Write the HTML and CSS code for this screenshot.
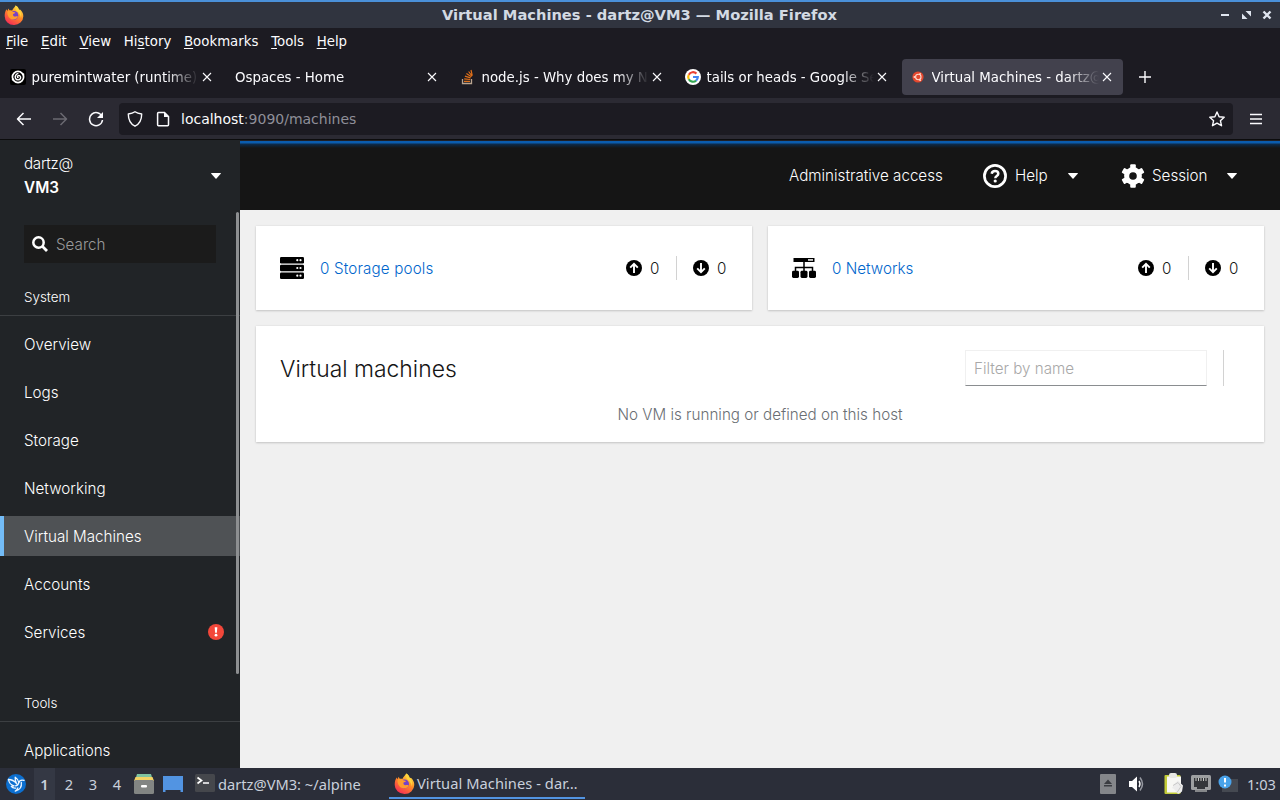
FILE: index.html
```
<!DOCTYPE html>
<html lang="en">
<head>
  <meta charset="utf-8">
  <title>Virtual Machines - dartz@VM3</title>
  <link rel="stylesheet" href="styles.css">
</head>
<body>
  <!-- shared icons -->
  <svg class="defs" width="0" height="0">
    <defs>
      <linearGradient id="foxFlame" x1="0.8" y1="0" x2="0.2" y2="1">
        <stop offset="0" stop-color="#fff04a"/>
        <stop offset="0.45" stop-color="#ff8a26"/>
        <stop offset="1" stop-color="#f5245a"/>
      </linearGradient>
      <symbol id="firefox" viewBox="0 0 20 20">
        <path fill="url(#foxFlame)" d="M2.6 4.2 3.4 6l1-2.4 1.2 2 2.6-.2C9 3.400 10.400 2.500 11.600.4c2.400 1 3 3 3.200 4.200l1.600.2c2 2 3 4.200 2.900 6.600A9.300 8.700 0 0 1 .7 11.200C.6 8.600 1.200 6 2.600 4.200z"/>
        <circle cx="10" cy="10.400" r="4.300" fill="#7542c9"/>
        <path fill="#ff9d2e" d="M3.500 6.400c2-1.400 4-1 5.300.4l2.600.7c-.4 1-1.600 1.200-2.300 1.500-.6 1.800.9 2.900 2.600 2.500 1.400-.3 2.400-.1 2.200.6-1 1.900-3.400 3-5.800 2.300-3.200-1-5.200-4.400-4.600-8z"/>
        <path fill="#ffd53d" d="M11.600.4c2.400 1 3 3 3.200 4.200 2 2 3.200 4.600 2.200 8.400-.3-3-1.800-5-3.400-6.200C12 5.400 10.800 3 11.600.4z"/>
      </symbol>
      <symbol id="close" viewBox="0 0 16 16">
        <path d="M4 4l8 8M12 4l-8 8" stroke="#fbfbfe" stroke-width="1.100" fill="none"/>
      </symbol>
      <symbol id="up" viewBox="0 0 16 16">
        <circle cx="8" cy="8" r="8"/>
        <path d="M8 13V4M4.200 7.700 8 3.900l3.800 3.800" stroke="#fff" stroke-width="1.900" fill="none"/>
      </symbol>
      <symbol id="down" viewBox="0 0 16 16">
        <circle cx="8" cy="8" r="8"/>
        <path d="M8 3v9M4.200 8.300 8 12.100l3.800-3.800" stroke="#fff" stroke-width="1.900" fill="none"/>
      </symbol>
      <symbol id="caret" viewBox="0 0 10 6">
        <path d="M0.500 0h9q.8 0 .2.800L5.500 5.500q-.5.500-1 0L.3.800Q-.3 0 .5 0z" fill="#fff"/>
      </symbol>
    </defs>
  </svg>

  <div class="titlebar">
    <svg class="fox" width="20" height="20"><use href="#firefox"/></svg>
    <span class="window-title">Virtual Machines - dartz@VM3 — Mozilla Firefox</span>
    <svg class="window-buttons" width="54" height="14" viewBox="0 0 54 14">
      <path d="M1 7h8" stroke="#dfe5ef" stroke-width="2"/>
      <path d="M25.500 3h5.500v5.500zM22 5.500V11h5.500z" fill="#dfe5ef"/>
      <path d="M43.500 3.500l7 7M50.500 3.500l-7 7" stroke="#dfe5ef" stroke-width="2.400"/>
    </svg>
  </div>

  <div class="menubar">
    <span><u>F</u>ile</span>
    <span><u>E</u>dit</span>
    <span><u>V</u>iew</span>
    <span>Hi<u>s</u>tory</span>
    <span><u>B</u>ookmarks</span>
    <span><u>T</u>ools</span>
    <span><u>H</u>elp</span>
  </div>

  <div class="tabs">
    <div class="tab">
      <svg width="16" height="16" viewBox="0 0 16 16">
        <rect width="16" height="16" rx="2" fill="#000"/>
        <circle cx="8" cy="8" r="5.600" fill="none" stroke="#fff" stroke-width="1.700"/>
        <path d="M8.500 8.300c-.8.600-1.600-.6-.6-1.400 1.400-1 3.300.6 2.600 2.500-.9 2-4 2-5 0-.9-2 .4-4.600 2.900-5" fill="none" stroke="#fff" stroke-width="1.400"/>
        <path d="M2 11l2-1M12 5.500l2.200-.5" stroke="#fff" stroke-width="1.500"/>
      </svg>
      <span class="tab-label">puremintwater (runtime)</span>
      <svg width="16" height="16"><use href="#close"/></svg>
    </div>
    <div class="tab">
      <span class="tab-label">Ospaces - Home</span>
      <svg width="16" height="16"><use href="#close"/></svg>
    </div>
    <div class="tab">
      <svg width="16" height="16" viewBox="0 0 16 16">
        <path d="M2.500 10v4.500h9V10" fill="none" stroke="#b9a48f" stroke-width="1.300"/>
        <path d="M4 12.300h6M4.200 9.800l6 .7M4.900 7.100l5.700 1.800M6.400 4.500l5 3.200M8.600 2.500l3.500 4.700M11 1l1.200 5.500" stroke="#e0701a" stroke-width="1.200"/>
      </svg>
      <span class="tab-label">node.js - Why does my N</span>
      <svg width="16" height="16"><use href="#close"/></svg>
    </div>
    <div class="tab">
      <svg width="16" height="16" viewBox="0 0 16 16">
        <circle cx="8" cy="8" r="8" fill="#fff"/>
        <g fill="none" stroke-width="2.200">
          <path d="M11.400 4.600A4.800 4.800 0 0 0 3.800 5.700" stroke="#ea4335"/>
          <path d="M3.800 5.700a4.800 4.800 0 0 0 0 4.600" stroke="#fbbc05"/>
          <path d="M3.800 10.300a4.800 4.800 0 0 0 7.300 1.300" stroke="#34a853"/>
          <path d="M8 8h4.800a4.800 4.800 0 0 1-1.700 3.600" stroke="#4285f4"/>
        </g>
      </svg>
      <span class="tab-label">tails or heads - Google Se</span>
      <svg width="16" height="16"><use href="#close"/></svg>
    </div>
    <div class="tab active">
      <svg width="16" height="16" viewBox="0 0 16 16">
        <circle cx="8" cy="8" r="5.600" fill="#e4482e"/>
        <circle cx="8.300" cy="8" r="2.700" fill="none" stroke="#ffd9cc" stroke-width="1.100"/>
        <g fill="#ffd9cc"><circle cx="4.400" cy="8" r="0.900"/><circle cx="10.100" cy="4.800" r="0.900"/><circle cx="10.100" cy="11.200" r="0.900"/></g>
      </svg>
      <span class="tab-label">Virtual Machines - dartz@</span>
      <svg width="16" height="16"><use href="#close"/></svg>
    </div>
    <svg class="new-tab" width="14" height="14" viewBox="0 0 14 14"><path d="M7 1v12M1 7h12" stroke="#fbfbfe" stroke-width="1.400"/></svg>
  </div>

  <div class="navbar">
    <svg class="nav-icon" width="16" height="16" viewBox="0 0 16 16"><path d="M15 8H1.500M7.500 2l-6 6 6 6" fill="none" stroke="#fbfbfe" stroke-width="1.500" stroke-linejoin="round"/></svg>
    <svg class="nav-icon" width="16" height="16" viewBox="0 0 16 16"><path d="M1 8h13.500M8.500 2l6 6-6 6" fill="none" stroke="#6b6a72" stroke-width="1.500" stroke-linejoin="round"/></svg>
    <svg class="nav-icon" width="16" height="16" viewBox="0 0 16 16"><path d="M14 5.500A6.500 6.500 0 1 0 14.500 9" fill="none" stroke="#fbfbfe" stroke-width="1.500"/><path d="M15 1v6H9z" fill="#fbfbfe"/></svg>
    <div class="urlbar">
      <svg width="16" height="16" viewBox="0 0 16 16"><path d="M8 .8C6 2.200 3.800 2.700 1.300 3c0 5.500 1.700 9.800 6.700 12.200C13 12.800 14.700 8.500 14.700 3 12.200 2.700 10 2.200 8 .8z" fill="none" stroke="#fbfbfe" stroke-width="1.400" stroke-linejoin="round"/></svg>
      <svg width="16" height="16" viewBox="0 0 16 16"><path d="M3.500 1.500h6l4 4v8.300q0 .9-.9.900H3.500q-.9 0-.9-.9V2.400q0-.9.900-.9z" fill="none" stroke="#fbfbfe" stroke-width="1.500"/><path d="M9 1v5h5z" fill="#fbfbfe"/></svg>
      <span class="url"><b>localhost</b>:9090/machines</span>
      <svg width="16" height="16" viewBox="0 0 16 16"><path d="M8 1l2.100 4.700 5.100.5-3.800 3.500 1.100 5L8 12.100l-4.500 2.600 1.100-5L.8 6.200l5.100-.5z" fill="none" stroke="#fbfbfe" stroke-width="1.400" stroke-linejoin="round"/></svg>
    </div>
    <svg width="12" height="12" viewBox="0 0 12 12"><path d="M0 1.500h12M0 6h12M0 10.500h12" stroke="#fbfbfe" stroke-width="1.300"/></svg>
  </div>

  <div class="page">
    <div class="sidebar">
      <div class="host">
        <div class="host-name"><span>dartz@</span><strong>VM3</strong></div>
        <svg width="10" height="6"><use href="#caret"/></svg>
      </div>
      <div class="search">
        <svg width="16" height="16" viewBox="0 0 16 16"><circle cx="6.500" cy="6.500" r="5.200" fill="none" stroke="#fff" stroke-width="2.500"/><path d="M10.300 10.300l4.700 4.700" stroke="#fff" stroke-width="2.800"/></svg>
        <span>Search</span>
      </div>
      <div class="nav-section">
        <h2>System</h2>
        <a>Overview</a>
        <a>Logs</a>
        <a>Storage</a>
        <a>Networking</a>
        <a class="current">Virtual Machines</a>
        <a>Accounts</a>
        <a>Services
          <svg width="16" height="16" viewBox="0 0 16 16"><circle cx="8" cy="8" r="8" fill="#f2473a"/><path d="M6.700 3.300h2.600l-.4 5.400H7.100z" fill="#fff"/><circle cx="8" cy="11.200" r="1.400" fill="#fff"/></svg>
        </a>
      </div>
      <div class="nav-section">
        <h2>Tools</h2>
        <a>Applications</a>
      </div>
      <div class="scrollbar"></div>
    </div>

    <div class="main">
      <div class="masthead">
        <span class="access">Administrative access</span>
        <div class="menu help">
          <svg width="24" height="24" viewBox="0 0 24 24">
            <circle cx="12" cy="12" r="10.600" fill="none" stroke="#fff" stroke-width="2.700"/>
            <path d="M8.700 9.700C9 7.900 10.300 7.100 12 7.100c1.900 0 3.300 1 3.300 2.700 0 2.300-3 2.200-3 4.400" fill="none" stroke="#fff" stroke-width="2.500"/>
            <circle cx="12.200" cy="17" r="1.600" fill="#fff"/>
          </svg>
          <span>Help</span>
          <svg width="10" height="6"><use href="#caret"/></svg>
        </div>
        <div class="menu session">
          <svg class="gear" width="24" height="24" viewBox="0 0 24 24">
            <g fill="#fff">
              <rect x="9.200" y="0.300" width="5.600" height="23.400" rx="1"/>
              <rect x="9.200" y="0.300" width="5.600" height="23.400" rx="1" transform="rotate(60 12 12)"/>
              <rect x="9.200" y="0.300" width="5.600" height="23.400" rx="1" transform="rotate(120 12 12)"/>
              <circle cx="12" cy="12" r="8.900"/>
            </g>
            <circle cx="12" cy="12" r="3.800" fill="#151515"/>
          </svg>
          <span>Session</span>
          <svg width="10" height="6"><use href="#caret"/></svg>
        </div>
      </div>

      <div class="content">
        <div class="cards">
          <div class="card summary">
            <svg width="24" height="24" viewBox="0 0 24 24">
              <rect y="1" width="24" height="6.500" rx="1.200"/><rect y="8.800" width="24" height="6.500" rx="1.200"/><rect y="16.500" width="24" height="6.500" rx="1.200"/>
              <g fill="#fff"><circle cx="17.300" cy="4.200" r="1.100"/><circle cx="20.500" cy="4.200" r="1.100"/><circle cx="17.300" cy="12" r="1.100"/><circle cx="20.500" cy="12" r="1.100"/><circle cx="17.300" cy="19.700" r="1.100"/><circle cx="20.500" cy="19.700" r="1.100"/></g>
            </svg>
            <a class="link pools">0 Storage pools</a>
            <div class="counts">
              <svg width="16" height="16"><use href="#up"/></svg><span>0</span>
              <i></i>
              <svg width="16" height="16"><use href="#down"/></svg><span>0</span>
            </div>
          </div>
          <div class="card summary">
            <svg width="24" height="24" viewBox="0 0 24 24">
              <path d="M1.500 2h21v4h-21z"/><path d="M16 3.200h5v1.500h-5z" fill="#fff"/>
              <path d="M12 6v9M3.500 15v-3.500h17V15" fill="none" stroke="#000" stroke-width="1.500"/>
              <rect y="14.800" width="7" height="7.200" rx="1.400"/><rect x="8.500" y="14.800" width="7" height="7.200" rx="1.400"/><rect x="17" y="14.800" width="7" height="7.200" rx="1.400"/>
            </svg>
            <a class="link">0 Networks</a>
            <div class="counts">
              <svg width="16" height="16"><use href="#up"/></svg><span>0</span>
              <i></i>
              <svg width="16" height="16"><use href="#down"/></svg><span>0</span>
            </div>
          </div>
        </div>

        <div class="card machines">
          <div class="toolbar">
            <h1>Virtual machines</h1>
            <input class="filter" type="text" placeholder="Filter by name">
            <i></i>
          </div>
          <p class="empty">No VM is running or defined on this host</p>
        </div>
      </div>
    </div>
  </div>

  <div class="taskbar">
    <svg class="start" width="20" height="20" viewBox="0 0 20 20">
      <circle cx="10" cy="10" r="10" fill="#0c6fd0"/>
      <g fill="none" stroke="#eef6ff" stroke-width="1.300" stroke-linejoin="round" stroke-linecap="round">
        <path d="M2.500 5.500c3 0 5.500 1 8 4C9.200 7 9 5 9.200 3.200c2.300 1.500 3.300 3.300 3.600 5.300"/>
        <path d="M2.500 5.500c.6 3.300 2.500 5.700 5.600 6.300-.8.600-1.700.7-2.800.6 1 1.500 2.600 2 4.500 1.700"/>
        <path d="M18 6.300c-2.600-.6-4.600.2-5.200 2.200-.4 2-1.400 3.200-3.300 3.300M15.300 8.300c.6 4-1.300 7.500-6 8.700 1.500-.9 2.300-1.800 2.500-3"/>
      </g>
    </svg>
    <div class="desktops"><b>1</b><span>2</span><span>3</span><span>4</span></div>
    <svg class="files" width="20" height="20" viewBox="0 0 20 20">
      <path d="M3 0h14l1.500 5h-17z" fill="#7fc3a0"/><path d="M1.500 3h17L20 7H0z" fill="#f3d265"/>
      <rect y="6" width="20" height="14" rx="1.500" fill="#828583"/><rect x="7" y="11" width="6" height="2.500" rx="1" fill="#fff"/>
    </svg>
    <svg class="desktop-icon" width="20" height="16" viewBox="0 0 20 16"><path d="M0 0h20v16h-2.500v-2h-15v2H0z" fill="#5294e2"/></svg>
    <div class="task terminal">
      <svg width="20" height="18" viewBox="0 0 20 18"><rect width="20" height="18" rx="1.500" fill="#45474c"/><path d="M2.500 3.500l4 3-4 3M8 9h6" fill="none" stroke="#fff" stroke-width="1.700"/></svg>
      <span>dartz@VM3: ~/alpine</span>
    </div>
    <div class="task running">
      <svg width="21" height="21"><use href="#firefox"/></svg>
      <span>Virtual Machines - dar…</span>
    </div>
    <div class="tray">
      <svg class="eject" width="16" height="20" viewBox="0 0 16 20"><rect width="16" height="20" rx="1" fill="#84868a"/><path d="M8 5.500l4 4.500H4zM4 11h8v1.500H4z" fill="#3b3d42"/></svg>
      <svg class="volume" width="16" height="16" viewBox="0 0 16 16"><path d="M0 5h3l5-4.500v15L3 11H0z" fill="#fff"/><path d="M10 5q2 3 0 6" fill="none" stroke="#fff" stroke-width="1.400"/><path d="M11 1.500q5 6.500 0 13" fill="none" stroke="#9699a1" stroke-width="1.500"/></svg>
      <svg class="clipboard" width="20" height="22" viewBox="0 0 20 22"><rect x="0.500" y="2" width="16" height="19" rx="1" fill="#c3cc39"/><rect x="3" y="3.500" width="14" height="16" fill="#f7f7f4"/><rect x="5" y="0" width="8" height="5" rx="2" fill="#e8e8e4"/><path d="M14 7.500l5 5-1 6-4 2.500-4-5-2-1 3-5z" fill="#ececec"/><path d="M9 12.500l5-3 3 4-4 6" fill="none" stroke="#c8c8c8"/></svg>
      <svg class="network" width="20" height="18" viewBox="0 0 20 18"><rect width="20" height="15" rx="1.500" fill="#9d9fa1"/><path d="M3 3h14v9h-3v2H6v-2H3z" fill="#34363a"/><path d="M5 3v3M7.500 3v3M10 3v3M12.500 3v3M15 3v3" stroke="#c7c8c4"/><path d="M4 15h12v2H4z" fill="#85878a"/></svg>
      <svg class="notify" width="20" height="18" viewBox="0 0 20 18"><rect x="4" y="4" width="16" height="13" fill="#454951"/><circle cx="7" cy="7" r="6.500" fill="#4aa3ea"/><path d="M7 3v4.500M7 9.500v2" stroke="#fff" stroke-width="2"/></svg>
      <span class="clock">1:03</span>
    </div>
  </div>
</body>
</html>
```
FILE: styles.css
```
* {
  box-sizing: border-box;
}

body {
  margin: 0;
  width: 1280px;
  height: 800px;
  overflow: hidden;
  display: flex;
  flex-direction: column;
  background: #1c1b22;
  color: #fbfbfe;
  font-family: "DejaVu Sans", sans-serif;
  font-size: 13.33px;
}

svg {
  display: block;
  flex: none;
}

.defs {
  position: absolute;
}

/* window */
.titlebar {
  flex: 0 0 28px;
  display: flex;
  align-items: center;
  padding: 0 6px 0 4px;
  border-top: 2px solid #4a90d9;
  background: #30343f;
}

.fox {
  margin-right: 35px;
}

.window-title {
  flex: 1;
  text-align: center;
  color: #d3dae3;
  font-size: 14.67px;
  font-weight: bold;
  line-height: 26px;
}

.menubar {
  flex: 0 0 27px;
  display: flex;
  gap: 12.7px;
  padding-left: 6px;
  line-height: 27px;
}

.menubar u {
  text-underline-offset: 2px;
}

.tabs {
  flex: 0 0 44px;
  display: flex;
  align-items: center;
  padding-top: 1px;
  border-bottom: 1px solid #2a2932;
}

.tab {
  display: flex;
  align-items: center;
  width: 221px;
  height: 36px;
  margin: 0 2px;
  padding: 0 8px;
  border-radius: 4px;
}

.tab.active {
  background: #42414d;
}

.tab-label {
  flex: 1;
  overflow: hidden;
  padding-top: 1px;
  white-space: nowrap;
  line-height: 20px;
  -webkit-mask-image: linear-gradient(to left, transparent, #000 32px);
  mask-image: linear-gradient(to left, transparent, #000 32px);
}

.tab svg + .tab-label {
  margin-left: 5.5px;
}

.new-tab {
  margin-left: 13px;
}

.navbar {
  flex: 0 0 42px;
  display: flex;
  align-items: center;
  margin-top: -1px;
  padding-left: 16px;
  border-bottom: 1px solid #0c0c0d;
  background: #2b2a33;
}

.nav-icon {
  margin-right: 20px;
}

.navbar .nav-icon:nth-child(3) {
  margin-right: 15px;
}

.urlbar {
  display: flex;
  align-items: center;
  width: 1114px;
  height: 32px;
  margin-right: 17px;
  padding: 0 8px;
  border-radius: 4px;
  background: #1c1b22;
}

.urlbar svg:nth-child(2) {
  margin-left: 12px;
}

.url {
  flex: 1;
  margin-left: 10px;
  color: #8f8f99;
  font-size: 14px;
}

.url b {
  color: #fbfbfe;
  font-weight: normal;
}

/* page */
.page {
  flex: 0 0 628px;
  display: flex;
  overflow: hidden;
  font-family: Inter, sans-serif;
  font-size: 15.2px;
  font-weight: 300;
}

.sidebar {
  position: relative;
  width: 240px;
  overflow: hidden;
  background: #212427;
  color: #fff;
}

.host {
  display: flex;
  align-items: center;
  justify-content: space-between;
  height: 71px;
  padding: 0 19px 0 24px;
}

.host-name {
  display: flex;
  flex-direction: column;
  line-height: 24px;
}

.host-name span {
  letter-spacing: -0.3px;
}

.host-name strong {
  font-weight: 600;
  font-size: 15.3px;
}

.search {
  display: flex;
  align-items: center;
  gap: 8px;
  width: 192px;
  height: 38px;
  margin: 14px 24px 15px;
  padding: 0 8px;
  background: #1b1b1b;
  color: #9a9a9a;
}

.nav-section {
  margin-bottom: 32px;
}

.nav-section h2 {
  height: 38px;
  margin: 0 0 8px;
  padding-left: 24px;
  border-bottom: 1px solid #3c3f42;
  font-size: 13.4px;
  font-weight: 300;
  line-height: 38px;
}

.nav-section a {
  display: flex;
  align-items: center;
  justify-content: space-between;
  height: 40px;
  margin-bottom: 8px;
  padding: 0 16px 0 24px;
}

.nav-section a:last-child {
  margin-bottom: 0;
}

.nav-section a.current {
  padding-left: 20px;
  border-left: 4px solid #73bcf7;
  background: #4f5255;
}

.scrollbar {
  position: absolute;
  top: 72px;
  left: 236px;
  width: 3px;
  height: 462px;
  border-radius: 2px;
  background: #8d8f91;
}

.main {
  flex: 1;
  background: #f0f0f0;
  color: #151515;
}

.masthead {
  display: flex;
  align-items: center;
  justify-content: flex-end;
  height: 70px;
  padding-right: 43px;
  border-top: 1px solid #1f1f24;
  background: linear-gradient(#0b5cad 0, #0b5cad 2px, #0c2b4c 3px, #151515 7px);
  color: #fff;
}

.access {
  width: 154px;
  white-space: nowrap;
}

.menu {
  display: flex;
  align-items: center;
  gap: 8px;
}

.menu span {
  white-space: nowrap;
}

.menu.help {
  margin-left: 40px;
}

.menu.help span {
  width: 45px;
}

.menu.session {
  margin-left: 43px;
}

.menu.session span {
  width: 67px;
}

.gear {
  margin-right: -1px;
}

.content {
  display: flex;
  flex-direction: column;
  gap: 16px;
  padding: 16px;
}

.cards {
  display: flex;
  gap: 16px;
}

.card {
  background: #fff;
  box-shadow: 0 1px 2px rgba(3, 3, 3, 0.16), 0 0 2px rgba(3, 3, 3, 0.08);
}

.summary {
  flex: 1;
  display: flex;
  align-items: center;
  height: 84px;
  padding: 0 24px;
}

.link {
  flex: 1;
  margin-left: 16px;
  color: #0066cc;
}

.link.pools {
  letter-spacing: 0.15px;
}

.counts {
  display: flex;
  align-items: center;
}

.counts span {
  width: 10px;
  margin-left: 8px;
}

.counts span:last-child {
  width: 11px;
}

.counts i,
.toolbar i {
  width: 1px;
  height: 24px;
  margin: 0 16px;
  background: #d2d2d2;
}

.machines {
  height: 116px;
  padding: 24px 24px 0;
}

.toolbar {
  display: flex;
  align-items: center;
  height: 36px;
}

.toolbar h1 {
  flex: 1;
  margin: 0;
  padding-top: 2px;
  font-size: 22.9px;
  font-weight: 300;
}

.toolbar i {
  height: 36px;
}

.filter {
  width: 242px;
  height: 36px;
  padding: 0 8px;
  border: 1px solid #f0f0f0;
  border-bottom-color: #8a8d90;
  border-radius: 0;
  background: #fff;
  font: inherit;
}

.filter::placeholder {
  color: #a8a8a8;
}

.empty {
  margin: 17px 0 0;
  color: #6a6e73;
  line-height: 24px;
  text-align: center;
}

/* panel */
.taskbar {
  flex: 0 0 32px;
  display: flex;
  align-items: center;
  padding: 0 4px 0 6px;
  background: #2b2e39;
  color: #c9d0dc;
  font-family: "Noto Sans", sans-serif;
  font-size: 14.67px;
}

.start {
  margin-right: 8px;
}

.desktops {
  display: flex;
  width: 99px;
  line-height: 32px;
  text-align: center;
}

.desktops b,
.desktops span {
  width: 24px;
}

.desktops b {
  width: 21px;
  background: #343844;
  font-weight: 600;
}

.desktops b + span {
  margin-left: 2px;
}

.files {
  margin-right: 8px;
}

.files,
.desktop-icon {
  margin-left: 1px;
}

.task {
  display: flex;
  align-items: center;
  height: 32px;
  white-space: nowrap;
}

.terminal {
  width: 194px;
  gap: 3px;
  margin-left: 12px;
}

.terminal svg {
  margin-top: -2px;
}

.running {
  width: 196px;
  height: 30px;
  gap: 2px;
  padding-left: 5px;
  border-bottom: 2px solid #5294e2;
  letter-spacing: 0.05px;
}

.tray {
  display: flex;
  align-items: center;
  margin-left: auto;
}

.volume {
  margin-left: 13px;
}

.clipboard {
  margin-left: 19px;
}

.network {
  margin-left: 7px;
}

.notify {
  margin-left: 7px;
}

.clock {
  margin-left: 9px;
}
```
